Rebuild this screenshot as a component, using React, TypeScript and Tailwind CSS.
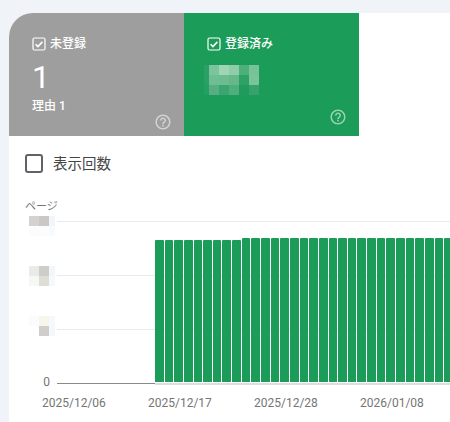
const FONT = "font-['Roboto','Noto_Sans_CJK_JP',sans-serif]";

const bars = Array.from({ length: 31 }, (_, i) => (i < 9 ? 142 : 144));
const dates = ["2025/12/06", "2025/12/17", "2025/12/28", "2026/01/08"];

const greenMosaic = [
  ["#2aa066", "#7cc49c", "#9fd4b5", "#8fcca9", "#4db07b", "#78c298"],
  ["#2aa066", "#6fbd92", "#6dbb90", "#66b88b", "#2fa167", "#7ac49c"],
  ["#22a05f", "#59ad82", "#3aa56f", "#4fae7e", "#219b5d", "#36a36c"],
];
const tickA = [
  ["#d3d2cf", "#c9c8c6", "#f2f6fa"],
  ["#fbfdfc", "#fbfcfb", "#f7fbfd"],
];
const tickB = [
  ["#eaeae6", "#cfcdca", "#f2f7fb"],
  ["#f5f9f5", "#e0ddd6", "#f5f9fc"],
];
const tickC = [
  ["#fafbfb", "#f7f5ec", "#f5f9fc"],
  ["#ffffff", "#d0cecb", "#f3f8fc"],
];

const Mosaic = ({ rows, first = 10, last = 10 }: { rows: string[][]; first?: number; last?: number }) => (
  <div className="flex flex-col">
    {rows.map((row, r) => (
      <div key={r} className="flex h-[10px]">
        {row.map((c, i) => (
          <div
            key={i}
            className="h-full"
            style={{ background: c, width: i === 0 ? first : i === row.length - 1 ? last : 10 }}
          />
        ))}
      </div>
    ))}
  </div>
);

const Check = () => (
  <svg width="14" height="14" viewBox="0 0 14 14" className="shrink-0">
    <rect x="1" y="1" width="12" height="12" rx="1.5" fill="none" stroke="#fff" strokeWidth="1.2" />
    <path d="M3.6 7.2l2.3 2.3 4.5-4.6" fill="none" stroke="#fff" strokeWidth="1.6" />
  </svg>
);

const Help = () => (
  <svg width="18" height="18" viewBox="0 0 24 24" fill="#fff" fillOpacity="0.55" className="self-end">
    <path d="M11 18h2v-2h-2v2zm1-16C6.48 2 2 6.48 2 12s4.48 10 10 10 10-4.48 10-10S17.52 2 12 2zm0 18c-4.41 0-8-3.59-8-8s3.59-8 8-8 8 3.59 8 8-3.59 8-8 8zm0-14c-2.21 0-4 1.79-4 4h2c0-1.1.9-2 2-2s2 .9 2 2c0 2-3 1.75-3 5h2c0-2.25 3-2.5 3-5 0-2.21-1.79-4-4-4z" />
  </svg>
);

export default function App() {
  return (
    <div className={`${FONT} w-[450px] h-[422px] overflow-hidden bg-[#f0f4f9] pl-[9px] pt-[13px]`}>
      <div className="w-full h-full bg-white rounded-tl-[24px] overflow-hidden">
        {/* Tabs */}
        <div className="flex h-[123px]">
          <div className="w-[175px] flex flex-col bg-[#9e9e9e] text-white pl-[23px] pr-[12px] pt-[23px] pb-[10px]">
            <div className="flex items-center gap-[4px] text-[12px] leading-[16px] font-medium">
              <Check />
              未登録
            </div>
            <div className="text-[32px] leading-[32px] mt-[9px]">1</div>
            <div className="text-[12px] leading-[14px] font-medium mt-[6px]">理由 1</div>
            <div className="mt-auto flex justify-end">
              <Help />
            </div>
          </div>
          <div className="w-[175px] flex flex-col bg-[#1b9c58] text-white pl-[23px] pr-[12px] pt-[23px] pb-[10px]">
            <div className="flex items-center gap-[4px] text-[12px] leading-[16px] font-medium">
              <Check />
              登録済み
            </div>
            <div className="mt-[13px] -ml-[3px]">
              <Mosaic rows={greenMosaic} first={5} />
            </div>
            <div className="mt-auto flex justify-end">
              <Help />
            </div>
          </div>
        </div>

        {/* Metric toggle */}
        <div className="flex items-center gap-[10px] pl-[16px] mt-[17px] h-[20px]">
          <div className="w-[18px] h-[19px] rounded-[3px] border-2 border-[#5f6368]" />
          <span className="text-[14.5px] text-[#444746] pt-[4px]">表示回数</span>
        </div>

        {/* Chart */}
        <div className="pl-[16px] mt-[27px]">
          <div className="text-[11px] leading-[14px] text-[#757575]">ページ</div>
          <div className="flex mt-[7px] h-[164px]">
            <div className="w-[32px] shrink-0 relative">
              <div className="absolute left-[4px] -top-[5px]">
                <Mosaic rows={tickA} last={6} />
              </div>
              <div className="absolute left-[4px] top-[45px]">
                <Mosaic rows={tickB} last={6} />
              </div>
              <div className="absolute left-[4px] top-[95px]">
                <Mosaic rows={tickC} last={6} />
              </div>
              <div className="absolute right-[7px] bottom-[-3px] text-[12px] leading-[12px] text-[#757575]">0</div>
            </div>
            <div className="relative flex-1">
              <div className="h-full flex flex-col justify-between">
                <div className="h-px bg-[#e8eaed]" />
                <div className="h-px bg-[#e8eaed]" />
                <div className="h-px bg-[#e8eaed]" />
                <div className="h-[2px] flex">
                  <div className="w-[98px] h-px bg-[#8a8a8a]" />
                  <div className="flex-1 bg-[#dddddd]" />
                </div>
              </div>
              <div className="absolute inset-0 flex items-end gap-px pl-[98px] pb-[3px]">
                {bars.map((h, i) => (
                  <div
                    key={i}
                    className="w-[8.65px] shrink-0 bg-[#1b9c58] rounded-t-[1px]"
                    style={{ height: h }}
                  />
                ))}
              </div>
            </div>
          </div>
          <div className="flex ml-[17px] mt-[10px]">
            {dates.map((d) => (
              <div key={d} className="w-[106px] shrink-0 text-[12px] leading-[16px] text-[#757575]">
                {d}
              </div>
            ))}
          </div>
        </div>
      </div>
    </div>
  );
}
